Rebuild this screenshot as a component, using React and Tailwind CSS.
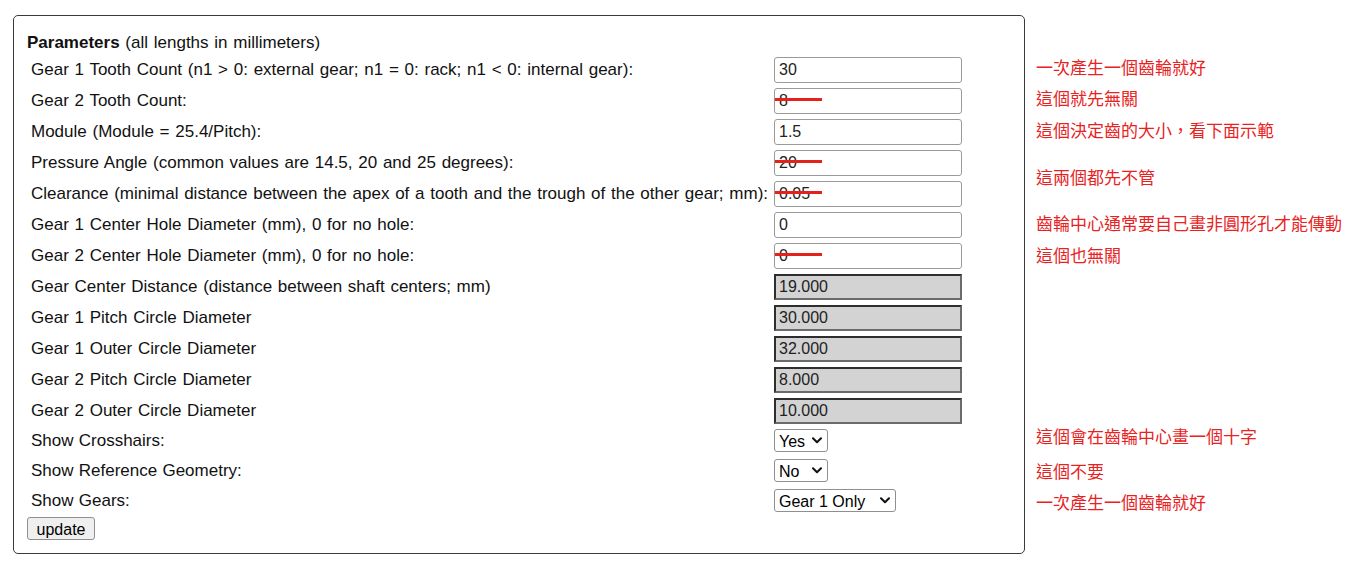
import React from 'react'

const fields = [
  { label: 'Gear 1 Tooth Count (n1 > 0: external gear; n1 = 0: rack; n1 < 0: internal gear):', value: '30' },
  { label: 'Gear 2 Tooth Count:', value: '8', struck: true },
  { label: 'Module (Module = 25.4/Pitch):', value: '1.5' },
  { label: 'Pressure Angle (common values are 14.5, 20 and 25 degrees):', value: '20', struck: true },
  { label: 'Clearance (minimal distance between the apex of a tooth and the trough of the other gear; mm):', value: '0.05', struck: true },
  { label: 'Gear 1 Center Hole Diameter (mm), 0 for no hole:', value: '0' },
  { label: 'Gear 2 Center Hole Diameter (mm), 0 for no hole:', value: '0', struck: true },
  { label: 'Gear Center Distance (distance between shaft centers; mm)', value: '19.000', readOnly: true },
  { label: 'Gear 1 Pitch Circle Diameter', value: '30.000', readOnly: true },
  { label: 'Gear 1 Outer Circle Diameter', value: '32.000', readOnly: true },
  { label: 'Gear 2 Pitch Circle Diameter', value: '8.000', readOnly: true },
  { label: 'Gear 2 Outer Circle Diameter', value: '10.000', readOnly: true },
]

const selects = [
  { label: 'Show Crosshairs:', options: ['Yes', 'No'], width: 'w-[54px]' },
  { label: 'Show Reference Geometry:', options: ['No', 'Yes'], width: 'w-[54px]' },
  { label: 'Show Gears:', options: ['Gear 1 Only', 'Gear 2 Only', 'Both Gears'], width: 'w-[122px]' },
]

// notes in the right margin, top offsets measured from the screenshot
const notes = [
  { text: '一次產生一個齒輪就好', mt: 'mt-[59px]' },
  { text: '這個就先無關', mt: 'mt-[11px]' },
  { text: '這個決定齒的大小，看下面示範', mt: 'mt-[12px]' },
  { text: '這兩個都先不管', mt: 'mt-[27px]' },
  { text: '齒輪中心通常要自己畫非圓形孔才能傳動', mt: 'mt-[26px]' },
  { text: '這個也無關', mt: 'mt-[12px]' },
  { text: '這個會在齒輪中心畫一個十字', mt: 'mt-[161px]' },
  { text: '這個不要', mt: 'mt-[15px]' },
  { text: '一次產生一個齒輪就好', mt: 'mt-[11px]' },
]

function Field({ label, value, struck, readOnly }) {
  return (
    <div className="flex h-[31px] items-center">
      <div className="w-[747px] pl-[4px] whitespace-nowrap text-[17px] [word-spacing:1px]">{label}</div>
      <div className="relative">
        <input
          readOnly
          value={value}
          className={
            readOnly
              ? 'h-[26px] w-[188px] border-2 border-t-[#2e2e2e] border-l-[#2e2e2e] border-b-[#6b6b6b] border-r-[#6b6b6b] bg-[#d3d3d3] pl-[3px] text-[#222] outline-none'
              : 'h-[26px] w-[188px] rounded-[3px] border border-[#9a9a9a] bg-white pl-[4px] text-[#222] outline-none'
          }
        />
        {struck && (
          <span className="absolute left-[1px] top-[10px] h-[3px] w-[47px] bg-[#e3221d]" />
        )}
      </div>
    </div>
  )
}

function SelectRow({ label, options, width }) {
  return (
    <div className="flex h-[30px] items-center">
      <div className="w-[747px] pl-[4px] whitespace-nowrap text-[17px] [word-spacing:0.5px]">{label}</div>
      <div className={`relative ${width}`}>
        <select className="h-[23px] w-full appearance-none rounded-[3px] border border-[#8f8f8f] bg-white pl-[4px] text-black outline-none">
          {options.map((o) => (
            <option key={o}>{o}</option>
          ))}
        </select>
        <svg className="pointer-events-none absolute right-[6px] top-[8px]" width="10" height="7" viewBox="0 0 10 7">
          <path d="M1 1.2 L5 5.2 L9 1.2" fill="none" stroke="#111" strokeWidth="2" strokeLinecap="round" strokeLinejoin="round" />
        </svg>
      </div>
    </div>
  )
}

export default function App() {
  return (
    <div className="flex min-h-[568px] bg-white text-[16px] text-[#111] [font-family:'Liberation_Sans',Arial,sans-serif]">
      <div className="ml-[13px] mt-[15px] h-[539px] w-[1012px] shrink-0 rounded-[5px] border border-[#3a3a3a] px-[13px] pt-[17px]">
        <div className="h-[21px] text-[17px] leading-[20px] [word-spacing:1px]">
          <span className="font-bold">Parameters</span> (all lengths in millimeters)
        </div>
        {fields.map((f) => (
          <Field key={f.label} {...f} />
        ))}
        {selects.map((s) => (
          <SelectRow key={s.label} {...s} />
        ))}
        <button className="mt-[1px] h-[23px] w-[68px] rounded-[3px] border border-[#8f8f8f] bg-[#efefef] text-[16px] text-black">
          update
        </button>
      </div>
      <div className="ml-[11px] flex flex-col text-[17px] leading-[20px] text-[#e8231f] [font-family:'Liberation_Sans','Noto_Sans_CJK_TC',sans-serif]">
        {notes.map((n, i) => (
          <div key={i} className={`${n.mt} h-[20px] whitespace-nowrap`}>
            {n.text}
          </div>
        ))}
      </div>
    </div>
  )
}
